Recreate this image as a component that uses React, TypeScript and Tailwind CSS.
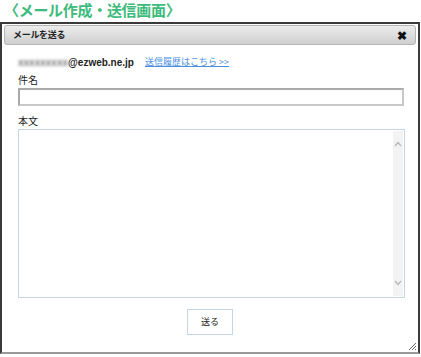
import React from 'react';

const jp = { fontFamily: '"Noto Sans CJK JP", "Liberation Sans", sans-serif' };

const MailCompose: React.FC = () => {
  return (
    <div className="w-[421px] h-[357px] bg-white overflow-hidden relative" style={jp}>
      {/* page heading */}
      <div className="h-[22px] pl-[4px] text-[15px] font-bold leading-[19px] text-[#3dbb7c] tracking-[-0.3px]">
        〈メール作成・送信画面〉
      </div>

      {/* dialog */}
      <div className="relative w-[420px] h-[332px] border-2 border-[#3a3a3a] border-b-[#9a9a9a] bg-white flex flex-col">
        {/* title bar */}
        <div className="mx-[2px] mt-[1px] h-[20px] rounded-[3px] border border-[#b4b4b4] bg-gradient-to-b from-[#ececec] to-[#cfcfcf] flex items-center justify-between px-[8px]">
          <span className="text-[9px] font-bold text-[#222] tracking-[-0.3px]">メールを送る</span>
          <span className="text-[12px] font-black text-[#111] leading-none">✖</span>
        </div>

        <div className="flex flex-col px-[16px]">
          {/* address + history link */}
          <div className="mt-[10px] flex items-center h-[14px]">
            <span className="text-[10px] font-bold text-[#777] blur-[1.4px]" style={{ fontFamily: '"Liberation Sans", sans-serif' }}>
              xxxxxxxxx
            </span>
            <span className="text-[10px] font-bold text-[#222]" style={{ fontFamily: '"Liberation Sans", sans-serif' }}>
              @ezweb.ne.jp
            </span>
            <a className="ml-[11px] text-[9px] text-[#4a8fe0] underline">送信履歴はこちら &gt;&gt;</a>
          </div>

          {/* subject */}
          <div className="mt-[4px] text-[10px] text-[#222] h-[14px] leading-[14px]">件名</div>
          <div className="mt-[1px] w-[386px] h-[18px] border-2 border-[#a9a9a9] border-r-[#c8c8c8] border-b-[#c8c8c8] bg-white" />

          {/* body */}
          <div className="mt-[8px] text-[10px] text-[#222] h-[14px] leading-[14px]">本文</div>
          <div className="mt-[1px] w-[387px] h-[169px] border border-[#c5d5e8] bg-white flex justify-end p-[1px]">
            <div className="w-[10px] h-full bg-[#f3f3f3] flex flex-col items-center justify-between py-[10px]">
              <svg width="8" height="6" viewBox="0 0 8 6">
                <path d="M1 5 L4 1.5 L7 5" fill="none" stroke="#b5b5b5" strokeWidth="1.2" />
              </svg>
              <svg width="8" height="6" viewBox="0 0 8 6">
                <path d="M1 1 L4 4.5 L7 1" fill="none" stroke="#b5b5b5" strokeWidth="1.2" />
              </svg>
            </div>
          </div>

          {/* send button */}
          <div className="mt-[11px] flex justify-center">
            <div className="w-[46px] h-[26px] border border-[#c5d5e8] bg-white flex items-center justify-center text-[9px] text-[#222]">
              送る
            </div>
          </div>
        </div>

        {/* resize grip */}
        <svg className="absolute right-[1px] bottom-[1px]" width="10" height="10" viewBox="0 0 10 10">
          <path d="M9 2 L2 9 M9 5 L5 9 M9 8 L8 9" stroke="#666" strokeWidth="1" />
        </svg>
      </div>
    </div>
  );
};

export default MailCompose;
